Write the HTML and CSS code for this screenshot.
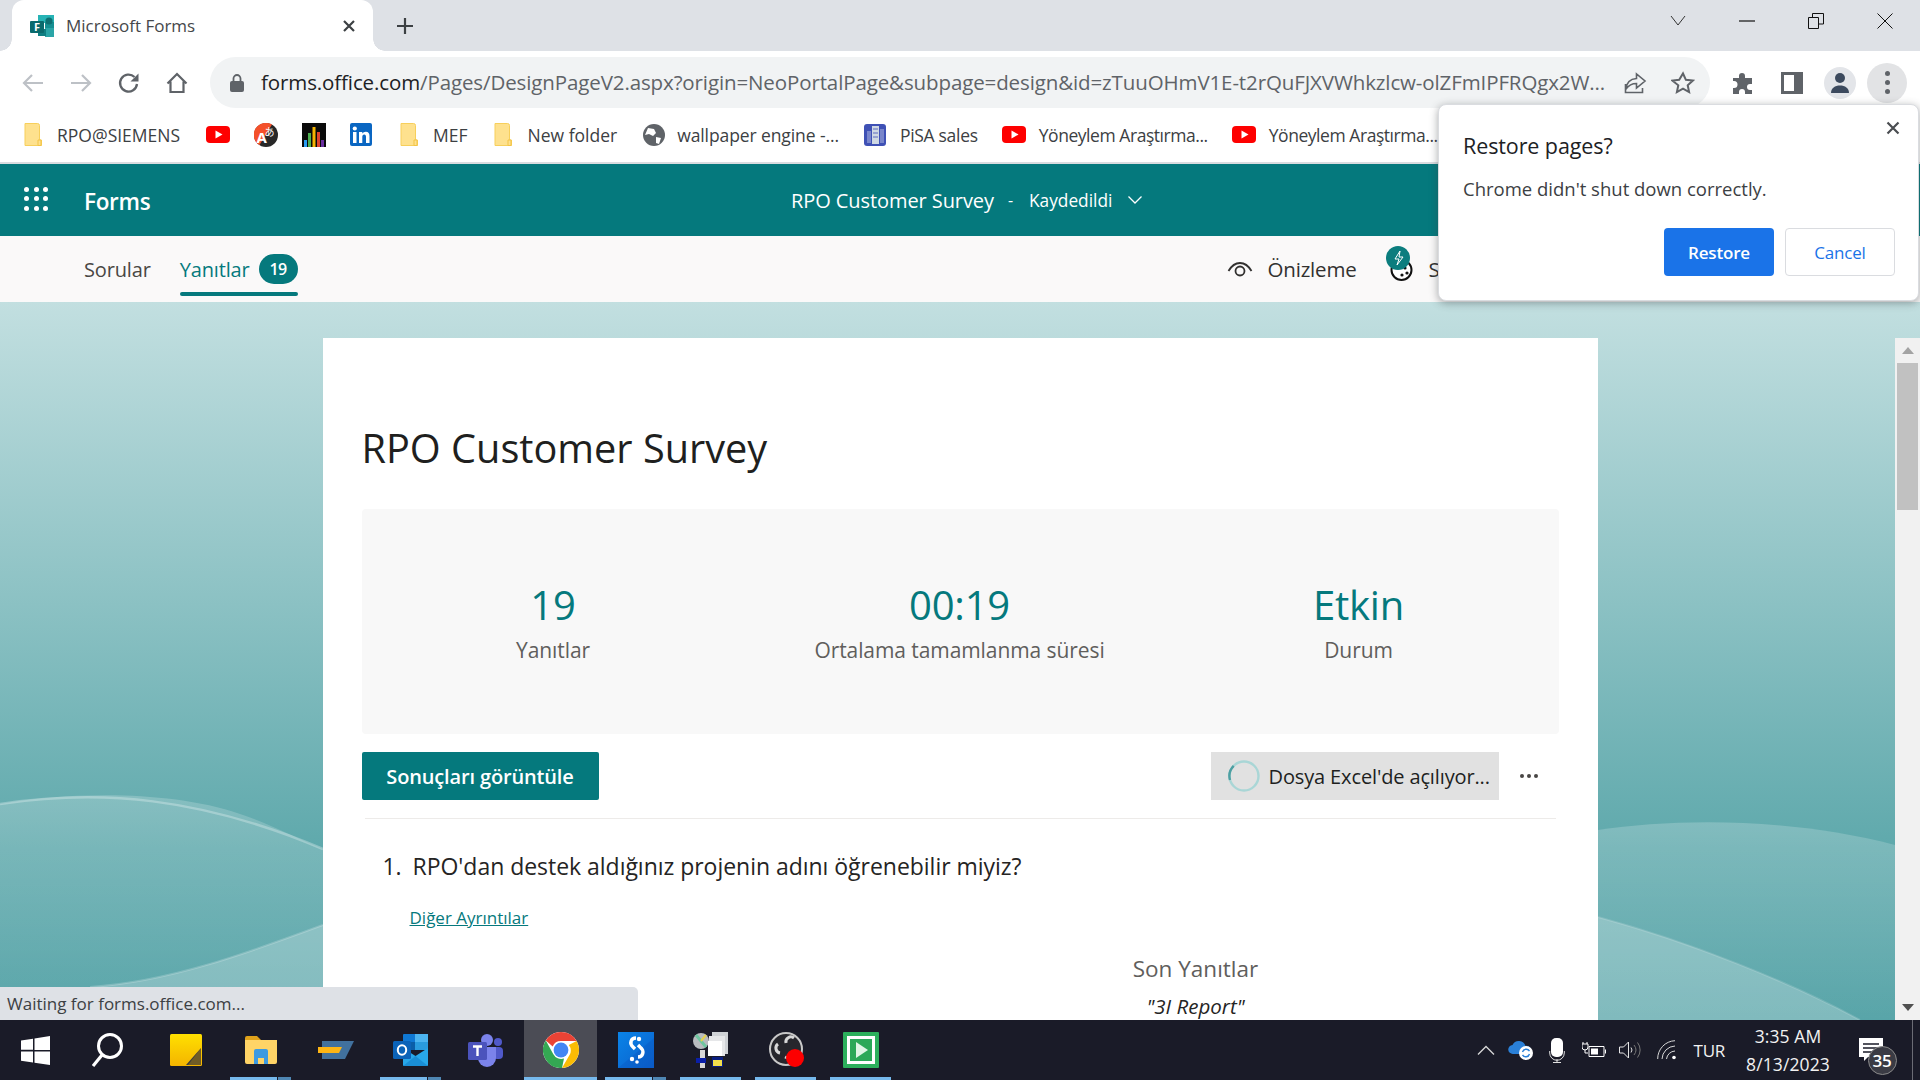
FILE: index.html
```html
<!DOCTYPE html>
<html lang="tr">
<head>
<meta charset="utf-8">
<title>Microsoft Forms</title>
<link rel="stylesheet" href="styles.css">
</head>
<body>
<div class="app">

  <header class="tabstrip">
    <div class="tab">
      <svg width="24" height="22" viewBox="0 0 24 22"><rect x="8" width="16" height="8" fill="#27b3b5"/><rect x="15" y="7" width="9" height="7" fill="#158f92"/><rect x="15" y="13" width="9" height="9" fill="#2aa5a7"/><rect x="8" y="14" width="8" height="7" fill="#0f7f82"/><circle cx="19" cy="6" r="3.6" fill="#0e6f72"/><rect y="6" width="14" height="12" rx="1" fill="#0a6a6d"/><text x="7" y="16" class="fav-f">F</text></svg>
      <span class="tab-title">Microsoft Forms</span>
      <svg class="tab-x" width="14" height="14" viewBox="0 0 14 14"><path d="M2 2l10 10M12 2L2 12" stroke="#3c4043" stroke-width="2.2" fill="none"/></svg>
    </div>
    <svg class="newtab" width="18" height="18" viewBox="0 0 18 18"><path d="M9 1v16M1 9h16" stroke="#3c4043" stroke-width="2.2" fill="none"/></svg>
    <div class="winctl">
      <svg width="16" height="12" viewBox="0 0 16 12"><path d="M1 1l7 9 7-9" stroke="#333" fill="none"/></svg>
      <svg width="16" height="12" viewBox="0 0 16 12"><path d="M0 6h16" stroke="#111" stroke-width="1.2"/></svg>
      <svg width="16" height="16" viewBox="0 0 16 16"><path d="M.5 4.5h10v11H.5zM4.5 4V.5h11V11H11" stroke="#111" fill="none"/></svg>
      <svg width="16" height="16" viewBox="0 0 16 16"><path d="M.5.5l15 15M15.500 .5l-15 15" stroke="#111" fill="none"/></svg>
    </div>
  </header>

  <div class="toolbar">
    <div class="navbtns">
      <svg width="24" height="24" viewBox="0 0 24 24"><path d="M22 12H3M11 4l-8 8 8 8" stroke="#bdc1c6" stroke-width="2.200" fill="none"/></svg>
      <svg width="24" height="24" viewBox="0 0 24 24"><path d="M2 12h19M13 4l8 8-8 8" stroke="#bdc1c6" stroke-width="2.200" fill="none"/></svg>
      <svg width="24" height="24" viewBox="0 0 24 24"><path d="M20 13a8.500 8.500 0 1 1-2.500-7" stroke="#5f6368" stroke-width="2.300" fill="none"/><path d="M21.500 2.500v8h-8z" fill="#5f6368"/></svg>
      <svg width="24" height="24" viewBox="0 0 24 24"><path d="M2.500 12.500L12 3l9.500 9.500M5.500 10.500V21h13V10.500" stroke="#5f6368" stroke-width="2.200" fill="none"/></svg>
    </div>
    <div class="omnibox">
      <svg width="14" height="18" viewBox="0 0 14 18"><rect y="7" width="14" height="11" rx="2" fill="#5f6368"/><path d="M3.500 8V4.500a3.500 3.500 0 0 1 7 0V8" stroke="#5f6368" stroke-width="1.800" fill="none"/></svg>
      <div class="url"><span class="url-host">forms.office.com</span>/Pages/DesignPageV2.aspx?origin=NeoPortalPage&amp;subpage=design&amp;id=zTuuOHmV1E-t2rQuFJXVWhkzlcw-olZFmIPFRQgx2W...</div>
      <svg class="omni-ico" width="24" height="24" viewBox="0 0 24 24"><path d="M2.500 13v8.500h17V17M13.500 3v4.500C7 8 3.500 12 3 18c2.500-3.500 5.500-5.500 10.500-5.500V17L22 10z" stroke="#5f6368" stroke-width="1.600" fill="none"/></svg>
      <svg class="omni-ico" width="24" height="24" viewBox="0 0 24 24"><path d="M12 2.500l2.900 6.300 6.900.8-5.100 4.700 1.400 6.800-6.100-3.400-6.100 3.400 1.400-6.800L1.300 9.600l6.900-.8z" stroke="#5f6368" stroke-width="2" fill="none"/></svg>
    </div>
    <div class="tool-right">
      <svg width="24" height="24" viewBox="0 0 24 24"><path d="M2 7h6V5a3 3 0 0 1 6 0v2h7v6h-2a3 3 0 0 0 0 6h2v4h-7v-2a3 3 0 0 0-6 0v2H2v-6h1a3.500 3.500 0 0 0 0-7H2z" fill="#5f6368"/></svg>
      <svg width="22" height="24" viewBox="0 0 22 24"><path d="M1.500 2.500h19v19h-19z" stroke="#5f6368" stroke-width="3" fill="none"/><rect x="13" y="2" width="8" height="20" fill="#5f6368"/></svg>
      <div class="avatar"><svg width="20" height="22" viewBox="0 0 20 22"><circle cx="10" cy="6" r="5" fill="#3c4a5e"/><path d="M1 21c0-5 4-7.500 9-7.500s9 2.500 9 7.500z" fill="#3c4a5e"/></svg></div>
      <div class="kebab"><i></i><i></i><i></i></div>
    </div>
  </div>

  <nav class="bookmarks">
    <a class="bm bm-rpo"><svg class="ic-folder" width="18" height="23" viewBox="0 0 18 23"><use href="#folder"/></svg><span>RPO@SIEMENS</span></a>
    <a class="bm bm-ic"><svg width="24" height="17" viewBox="0 0 24 17"><use href="#yt"/></svg></a>
    <a class="bm bm-ic"><svg width="24" height="24" viewBox="0 0 24 24"><circle cx="12" cy="12" r="12" fill="#282828"/><path d="M18 1.600A12 12 0 0 0 5.500 22.100z" fill="#f4502a"/><text x="2.500" y="20" class="tr-a">A</text><text x="10.500" y="13" class="tr-b">あ</text></svg></a>
    <a class="bm bm-ic"><svg width="24" height="24" viewBox="0 0 24 24"><rect width="24" height="24" fill="#0a0a0a"/><rect x="2" y="17" width="3" height="7" fill="#2a9df4"/><rect x="6" y="10" width="3" height="14" fill="#4caf50"/><rect x="10.500" y="4" width="3" height="20" fill="#f5b400"/><rect x="15" y="9" width="3" height="15" fill="#e0452c"/><rect x="19" y="17" width="3" height="7" fill="#6a2fa0"/></svg></a>
    <a class="bm bm-ic bm-li"><svg width="22" height="23" viewBox="0 0 22 23"><rect width="22" height="23" rx="2" fill="#0a66c2"/><rect x="3" y="9" width="3.500" height="11" fill="#fff"/><circle cx="4.800" cy="5.500" r="2.100" fill="#fff"/><path d="M9 9h3.300v1.600c.7-1.100 2-1.900 3.500-1.900 2.700 0 3.700 1.700 3.700 4.500V20H16v-6c0-1.500-.5-2.400-1.800-2.400s-1.900 1-1.900 2.400v6H9z" fill="#fff"/></svg></a>
    <a class="bm bm-mef"><svg width="18" height="23" viewBox="0 0 18 23"><use href="#folder"/></svg><span>MEF</span></a>
    <a class="bm bm-new"><svg width="18" height="23" viewBox="0 0 18 23"><use href="#folder"/></svg><span>New folder</span></a>
    <a class="bm bm-wall"><svg width="22" height="22" viewBox="0 0 22 22"><circle cx="11" cy="11" r="11" fill="#5f6368"/><path d="M5 4l6 1 2 4-3 3-4-2-4 1zM13 13l5 1-2 6-3-1z" fill="#fff"/></svg><span>wallpaper engine -...</span></a>
    <a class="bm bm-pisa"><svg width="24" height="24" viewBox="0 0 24 24"><rect x="1" y="1" width="22" height="22" rx="3" fill="#3f51b5"/><rect x="9" y="3" width="7" height="18" fill="#cfd8e3"/><rect x="4" y="8" width="4" height="12" fill="#7986cb"/><rect x="17" y="6" width="4" height="14" fill="#7986cb"/><path d="M10 6h5M10 10h5M10 14h5" stroke="#5c6bc0"/></svg><span>PiSA sales</span></a>
    <a class="bm bm-y1"><svg width="24" height="17" viewBox="0 0 24 17"><use href="#yt"/></svg><span>Yöneylem Araştırma...</span></a>
    <a class="bm bm-y2"><svg width="24" height="17" viewBox="0 0 24 17"><use href="#yt"/></svg><span>Yöneylem Araştırma...</span></a>
  </nav>

  <svg class="defs" width="0" height="0">
    <defs>
      <symbol id="folder" viewBox="0 0 18 23"><path d="M1 .5h12.500a2 2 0 0 1 2 2V17h2v5.500H1z" fill="#fee18e" stroke="#f7cf5b"/><path d="M14 17h3v5.500h-3z" fill="#fee18e" stroke="#f3c446"/></symbol>
      <symbol id="yt" viewBox="0 0 24 17"><rect width="24" height="17" rx="4" fill="#fe0000"/><path d="M9.500 4.500v8l7-4z" fill="#fff"/></symbol>
      <linearGradient id="gw1" x1="0" y1="0" x2="0" y2="1"><stop offset="0" stop-color="#fff" stop-opacity=".2"/><stop offset="1" stop-color="#fff" stop-opacity=".02"/></linearGradient>
      <linearGradient id="gsky" x1="0" y1="0" x2="0" y2="1"><stop offset="0" stop-color="#ffe000"/><stop offset="1" stop-color="#f4b400"/></linearGradient>
      <linearGradient id="gs" x1="0" y1="0" x2="1" y2="1"><stop offset="0" stop-color="#0a84e8"/><stop offset="1" stop-color="#0b5fcb"/></linearGradient>
    </defs>
  </svg>

  <div class="formsbar">
    <div class="waffle"><i></i><i></i><i></i><i></i><i></i><i></i><i></i><i></i><i></i></div>
    <span class="brand">Forms</span>
    <span class="doc-title">RPO Customer Survey</span>
    <span class="doc-dash">-</span>
    <span class="doc-state">Kaydedildi</span>
    <svg width="16" height="10" viewBox="0 0 16 10"><path d="M1.500 1.500L8 8l6.500-6.500" stroke="#fff" stroke-width="1.300" fill="none"/></svg>
  </div>

  <div class="subnav">
    <a class="sub-link">Sorular</a>
    <a class="sub-link sub-on">Yanıtlar<b class="count">19</b></a>
    <div class="sub-right">
      <svg width="26" height="16" viewBox="0 0 26 16"><path d="M1.500 10C5 4 9 2 13 2s8 2 11.500 8" stroke="#323130" stroke-width="1.800" fill="none"/><circle cx="13" cy="10" r="4.500" stroke="#323130" stroke-width="1.800" fill="none"/></svg>
      <span class="preview">Önizleme</span>
      <span class="theme"><svg width="36" height="36" viewBox="0 0 36 36"><circle cx="15.500" cy="24" r="10" stroke="#111" stroke-width="2" fill="#fff"/><circle cx="19" cy="22" r="1.600" fill="#111"/><circle cx="21" cy="27" r="1.600" fill="#111"/><circle cx="16" cy="29" r="1.600" fill="#111"/><circle cx="12" cy="12" r="12" fill="#0b7d7e"/><path d="M14 5l-5 8h4l-2 6 6-8h-4z" stroke="#fff" fill="none"/></svg></span>
      <span class="share">S</span>
    </div>
  </div>

  <main class="page">
    <svg class="waves" width="1920" height="718" viewBox="0 0 1920 718">
      <path d="M0 502C70 490 170 488 240 512 270 522 300 538 323 547V718H0z" fill="url(#gw1)"/>
      <path d="M0 502C100 487 200 495 323 547" fill="none" stroke="#fff" stroke-opacity=".28" stroke-width="2.500"/>
      <path d="M90 685C170 680 250 650 323 623V718H90z" fill="#fff" fill-opacity=".24"/>
      <path d="M90 685C170 680 250 650 323 623" fill="none" stroke="#fff" stroke-opacity=".2" stroke-width="2"/>
      <path d="M1598 528C1680 516 1790 516 1895 543V718H1598z" fill="url(#gw1)"/>
      <path d="M1598 615C1690 640 1790 680 1860 718H1598z" fill="#fff" fill-opacity=".24"/>
      <path d="M1598 615C1690 640 1790 680 1860 718" fill="none" stroke="#fff" stroke-opacity=".14" stroke-width="2"/>
    </svg>
    <article class="card">
      <h1 class="form-title">RPO Customer Survey</h1>
      <section class="stats">
        <div class="stat"><div class="stat-num">19</div><div class="stat-label">Yanıtlar</div></div>
        <div class="stat"><div class="stat-num">00:19</div><div class="stat-label">Ortalama tamamlanma süresi</div></div>
        <div class="stat"><div class="stat-num">Etkin</div><div class="stat-label">Durum</div></div>
      </section>
      <div class="actions">
        <button class="btn-primary">Sonuçları görüntüle</button>
        <button class="btn-excel"><svg width="34" height="34" viewBox="0 0 34 34"><circle cx="17" cy="17" r="14.500" fill="none" stroke="#a9d6d6" stroke-width="2.400"/><path d="M6.700 6.800A14.500 14.500 0 0 0 3 21" fill="none" stroke="#4d9fa2" stroke-width="2.400"/></svg><span>Dosya Excel'de açılıyor...</span></button>
        <div class="more"><i></i><i></i><i></i></div>
      </div>
      <hr class="rule">
      <div class="question"><span class="q-no">1.</span><span>RPO'dan destek aldığınız projenin adını öğrenebilir miyiz?</span></div>
      <a class="details">Diğer Ayrıntılar</a>
      <div class="latest">
        <div class="latest-head">Son Yanıtlar</div>
        <div class="latest-item">"3I Report"</div>
      </div>
    </article>
    <div class="scrollbar">
      <div class="sb-up"></div>
      <div class="sb-thumb"></div>
      <div class="sb-down"></div>
    </div>
    <div class="status">Waiting for forms.office.com...</div>
  </main>

  <footer class="taskbar">
    <div class="task task-start"><svg width="31" height="31" viewBox="0 0 31 31"><path d="M1 5.500l12-1.700v11H1zM14.500 3.500L30 1v14H14.500zM1 16.500h12v11L1 25.700zM14.500 16.500H30V30l-15.500-2.300z" fill="#fff"/></svg></div>
    <div class="task task-search"><svg width="34" height="36" viewBox="0 0 34 36"><circle cx="18" cy="14" r="11.500" fill="none" stroke="#fff" stroke-width="3"/><path d="M10 23L1 34" stroke="#fff" stroke-width="3.200"/></svg></div>
    <div class="task"><svg width="32" height="32" viewBox="0 0 32 32"><rect width="32" height="32" rx="1.500" fill="url(#gsky)"/><path d="M16 31l15-17v17z" fill="#3b3b3b"/><path d="M31 14v17H18z" fill="#d39a00" opacity=".35"/></svg></div>
    <div class="task task-run task-stack"><svg width="32" height="28" viewBox="0 0 32 28"><path d="M0 2a2 2 0 0 1 2-2h10l4 4h16v4H0z" fill="#dfa21b"/><path d="M0 4h32v22a2 2 0 0 1-2 2H2a2 2 0 0 1-2-2z" fill="#ffd467"/><path d="M9 28v-13a2 2 0 0 1 2-2h10a2 2 0 0 1 2 2v13h-4v-6h-6v6z" fill="#3d9ae0"/><rect x="13" y="22" width="6" height="6" fill="#ffd467"/></svg></div>
    <div class="task"><svg width="36" height="18" viewBox="0 0 36 18"><path d="M4 0h32l-9 18H4z" fill="#41719e"/><path d="M0 6h24l-3 6H0z" fill="#fdb515"/></svg></div>
    <div class="task task-run task-stack"><svg width="35" height="32" viewBox="0 0 35 32"><rect x="10" width="25" height="15" rx="1" fill="#0f78d4"/><rect x="22" width="13" height="8" fill="#4cb4f0"/><rect x="10" y="8" width="12" height="8" fill="#0b5ea8"/><rect x="22" y="8" width="13" height="8" fill="#2a9cdf"/><path d="M10 14l12.500 8L35 14v17a1 1 0 0 1-1 1H11a1 1 0 0 1-1-1z" fill="#28a8ea"/><path d="M10 32l12.500-10L35 32z" fill="#1a8fd6"/><rect y="7" width="18" height="18" rx="1.500" fill="#0b63b8"/><ellipse cx="9" cy="16" rx="4.200" ry="4.700" fill="none" stroke="#fff" stroke-width="2"/></svg></div>
    <div class="task"><svg width="35" height="33" viewBox="0 0 35 33"><circle cx="30" cy="8" r="4" fill="#5059c9"/><rect x="25" y="13" width="10" height="12" rx="4" fill="#5059c9"/><circle cx="19" cy="6" r="6" fill="#7b83eb"/><path d="M10 13h18v11a9 9 0 0 1-18 0z" fill="#7b83eb"/><rect y="8" width="19" height="18" rx="1.500" fill="#4b53bc"/><path d="M5 12.500h9M9.500 12.500V22" stroke="#fff" stroke-width="2.400"/></svg></div>
    <div class="task task-on task-run"><svg width="36" height="36" viewBox="0 0 36 36"><circle cx="18" cy="18" r="18" fill="#fff"/><path d="M18 0a18 18 0 0 1 15.600 9H18a9 9 0 0 0-8.300 5.400L2.800 8.500A18 18 0 0 1 18 0z" fill="#ea4335"/><path d="M33.600 9A18 18 0 0 1 19 36l7.800-13.500A9 9 0 0 0 25.800 13z" fill="#fbbc04"/><path d="M2.800 8.500L10.200 22A9 9 0 0 0 21 26.500L19 36A18 18 0 0 1 2.800 8.500z" fill="#34a853"/><circle cx="18" cy="18" r="7.400" fill="#4285f4"/></svg></div>
    <div class="task task-run task-stack"><svg width="36" height="36" viewBox="0 0 36 36"><rect width="36" height="36" fill="url(#gs)"/><path d="M0 36l36-30v30z" fill="#0a4fb8" opacity=".3"/><path d="M18 6c-5 0-7 5-3 9l2 2" fill="none" stroke="#fff" stroke-width="3.400"/><path d="M20 13l2 2c5 4 3 10-2 10" fill="none" stroke="#fff" stroke-width="3.400"/><circle cx="21" cy="7" r="2.200" fill="#fff"/><circle cx="14" cy="27" r="2.200" fill="#fff"/><circle cx="19" cy="30" r="1.800" fill="#fff"/></svg></div>
    <div class="task task-run"><svg width="36" height="36" viewBox="0 0 36 36"><circle cx="8" cy="9" r="8" fill="#b9bcc0"/><path d="M8 9L3 3M8 9l5 6" stroke="#6fc6a0" stroke-width="3"/><path d="M8 9l5-6" stroke="#e4d24f" stroke-width="2"/><rect x="19" y="0" width="16" height="22" fill="#cfd2d6"/><rect x="16" y="4" width="16" height="20" fill="#e6e7e9"/><rect x="15" y="9" width="14" height="15" fill="#fff"/><rect x="7" y="18" width="5" height="18" fill="#d8d8d8"/><rect x="3" y="26" width="10" height="5" fill="#0a1fa8"/><rect x="19" y="25" width="11" height="10" fill="#0a1f80"/><rect x="20" y="28" width="9" height="6" fill="#f3e04c"/></svg></div>
    <div class="task task-run"><svg width="36" height="36" viewBox="0 0 36 36"><circle cx="18" cy="17" r="16" fill="#26262c" stroke="#c8c8c8" stroke-width="2"/><path d="M18 11a5 5 0 0 1 8-5M12 21a5 5 0 0 1-2-9M24 21a5 5 0 0 1-7 4" fill="none" stroke="#d8d8d8" stroke-width="3"/><circle cx="27" cy="26" r="9" fill="#fd0000"/></svg></div>
    <div class="task task-run"><svg width="36" height="36" viewBox="0 0 36 36"><rect width="36" height="36" rx="1" fill="#2cb05c"/><rect x="4" y="4" width="28" height="28" fill="#fff"/><rect x="7" y="7" width="22" height="22" fill="#2aa858"/><path d="M13 10l12 8-12 8z" fill="#dff5e6"/></svg></div>

    <div class="tray">
      <svg width="18" height="10" viewBox="0 0 18 10"><path d="M1 9.500L9 1.500l8 8" stroke="#d8d8d8" stroke-width="1.300" fill="none"/></svg>
      <svg class="tray-cloud" width="26" height="20" viewBox="0 0 26 20"><path d="M5 14a4.500 4.500 0 0 1-.5-9 7 7 0 0 1 13 1A4 4 0 0 1 20 14z" fill="#2a80d8"/><circle cx="18" cy="13" r="7" fill="#fff"/><path d="M14.500 12a3.800 3.800 0 0 1 7-.8M21.500 14a3.800 3.800 0 0 1-7 .8" stroke="#2a80d8" stroke-width="1.400" fill="none"/></svg>
      <svg class="tray-mic" width="16" height="25" viewBox="0 0 16 25"><rect x="2" width="12" height="19" rx="5" fill="#fff"/><path d="M.7 13v2a7 7 0 0 0 14.600 0v-2M8 21v3M4 24.500h8" stroke="#e0e0e0" fill="none"/></svg>
      <svg class="tray-batt" width="24" height="16" viewBox="0 0 24 16"><path d="M1 2v-2M5 2v-2" stroke="#fff"/><path d="M0 2h6v3a3 3 0 0 1-6 0zM3 8v3h3" stroke="#fff" fill="none"/><path d="M7 4.500h15v10H7z" stroke="#fff" fill="none"/><rect x="9" y="6.500" width="7" height="6" fill="#fff"/><rect x="23" y="7.500" width="1" height="4" fill="#fff"/></svg>
      <svg class="tray-vol" width="23" height="18" viewBox="0 0 23 18"><path d="M.5 6v6h4l5 5V1l-5 5z" stroke="#e6e6e6" fill="none"/><path d="M12 6.500a4 4 0 0 1 0 5" stroke="#ddd" fill="none"/><path d="M15 4a8 8 0 0 1 0 10M18.500 1.500a12 12 0 0 1 0 15" stroke="#777" fill="none"/></svg>
      <svg class="tray-wifi" width="20" height="20" viewBox="0 0 20 20"><path d="M.7 19A18 18 0 0 1 18 .7M5 19A13.500 13.500 0 0 1 18 6M9.500 19A9 9 0 0 1 18 11" stroke="#d8d8d8" fill="none"/><circle cx="17" cy="17.500" r="1.800" fill="#fff"/></svg>
      <span class="tray-lang">TUR</span>
      <div class="clock"><div>3:35 AM</div><div>8/13/2023</div></div>
      <div class="notif"><svg width="24" height="24" viewBox="0 0 24 24"><path d="M0 0h24v19H9l-4 4v-4H0z" fill="#fff"/><path d="M4 6h16M4 10h16M4 14h10" stroke="#1a1b28" stroke-width="1.300"/></svg><span class="notif-count">35</span></div>
      <div class="showdesk"></div>
    </div>
  </footer>

  <aside class="popup">
    <svg class="popup-x" width="14" height="14" viewBox="0 0 14 14"><path d="M1.500 1.500l11 11M12.500 1.500l-11 11" stroke="#4a4d51" stroke-width="2.200" fill="none"/></svg>
    <div class="popup-title">Restore pages?</div>
    <div class="popup-text">Chrome didn't shut down correctly.</div>
    <div class="popup-btns">
      <button class="pbtn pbtn-main">Restore</button>
      <button class="pbtn pbtn-alt">Cancel</button>
    </div>
  </aside>
</div>
</body>
</html>
```

FILE: styles.css
```css
* { box-sizing: border-box; }
html, body { margin: 0; height: 100%; overflow: hidden; }
body { font-family: "Open Sans", "Noto Sans", sans-serif; color: #323130; }
button { font-family: inherit; border: 0; padding: 0; }
svg { display: block; flex: none; }
h1 { margin: 0; font-weight: 400; }

.app { position: relative; width: 1920px; height: 1080px; display: flex; flex-direction: column; overflow: hidden; background: #fff; }
.defs { position: absolute; }

/* tab strip */
.tabstrip { height: 51px; flex: none; background: #dee1e6; display: flex; align-items: center; padding-left: 12px; }
.tab { position: relative; width: 361px; height: 51px; background: #fff; border-radius: 12px 12px 0 0; display: flex; align-items: center; padding: 0 18px; gap: 12px; }
.tab::before, .tab::after { content: ""; position: absolute; bottom: 0; width: 12px; height: 12px; }
.tab::before { left: -12px; background: radial-gradient(circle at 0 0, #dee1e6 11.5px, #fff 12px); }
.tab::after { right: -12px; background: radial-gradient(circle at 100% 0, #dee1e6 11.5px, #fff 12px); }
.fav-f { font: 700 11px "Open Sans", sans-serif; fill: #fff; text-anchor: middle; }
.tab-title { flex: 1; font-size: 17px; color: #45474a; white-space: nowrap; }
.tab-x { margin-right: -1px; }
.newtab { margin-left: 23px; }
.winctl { margin-left: auto; margin-right: 27px; display: flex; align-items: center; gap: 53px; margin-top: -9px; }

/* toolbar */
.toolbar { height: 57px; flex: none; background: #fff; display: flex; align-items: center; padding-top: 6px; }
.navbtns { width: 210px; padding-left: 21px; display: flex; gap: 24px; flex: none; }
.omnibox { width: 1500px; height: 51px; border-radius: 26px; background: #f1f3f4; display: flex; align-items: center; padding-left: 20px; flex: none; }
.url { width: 1362px; margin-left: 17px; flex: none; font-size: 20.500px; letter-spacing: -.115px; line-height: 28px; margin-top: -1px; color: #5f6368; white-space: nowrap; }
.url-host { color: #202124; }
.omni-ico + .omni-ico { margin-left: 24px; }
.tool-right { display: flex; align-items: center; padding-left: 21px; gap: 26px; }
.avatar { width: 32px; height: 32px; margin: 0 -6px 0 -5px; border-radius: 50%; background: #e3e5e9; display: flex; align-items: center; justify-content: center; }
.kebab { width: 40px; height: 40px; border-radius: 50%; background: #e2e3e5; display: flex; flex-direction: column; align-items: center; justify-content: center; gap: 4px; margin-left: -9px; }
.kebab i { width: 5px; height: 5px; border-radius: 50%; background: #5f6368; }

/* bookmarks */
.bookmarks { height: 56px; flex: none; display: flex; align-items: center; padding: 0 0 1px 24px; background: #fff; border-bottom: 2px solid #dadce0; font-size: 17.500px; color: #3c4043; white-space: nowrap; overflow: hidden; }
.bm { display: flex; align-items: center; gap: 15px; flex: none; }
.bm-rpo { margin-right: 26px; }
.bm-ic { margin-right: 24px; }
.bm-li { margin-right: 28px; }
.bm-mef { margin-right: 26px; }
.bm-new { margin-right: 26px; gap: 16px; }
.bm-wall { gap: 12px; margin-right: 24px; letter-spacing: -.1px; }
.bm-pisa { gap: 13px; margin-right: 24px; letter-spacing: -.3px; }
.bm-y1 { gap: 13px; margin-right: 24px; letter-spacing: -.45px; }
.bm-y2 { gap: 13px; letter-spacing: -.45px; }
.tr-a { font: 700 15px "Open Sans", sans-serif; fill: #fff; }
.tr-b { font: 400 10px "Noto Sans CJK JP", sans-serif; fill: #fff; }

/* forms bar */
.formsbar { height: 72px; flex: none; background: #05797d; color: #fff; display: flex; align-items: center; padding-left: 24px; }
.waffle { width: 22px; display: grid; grid-template-columns: repeat(3, 5px); gap: 4.500px; margin-top: -3px; }
.waffle i { width: 5px; height: 5px; border-radius: 50%; background: #fff; }
.brand { margin-left: 38px; width: 707px; font-size: 22.500px; font-weight: 600; letter-spacing: -.3px; margin-top: 2px; }
.doc-title { font-size: 20px; letter-spacing: -.08px; width: 217px; white-space: nowrap; }
.doc-dash { width: 21px; font-size: 16px; }
.doc-state { font-size: 17.300px; width: 98px; white-space: nowrap; }

/* sub nav */
.subnav { height: 66px; flex: none; background: #faf9f9; display: flex; padding-left: 84px; }
.sub-link { height: 66px; display: flex; align-items: center; font-size: 20px; letter-spacing: -.15px; color: #494744; margin-right: 29px; }
.sub-on { position: relative; color: #05797d; margin: 0; font-weight: 500; }
.sub-on::after { content: ""; position: absolute; left: 0; right: 0; top: 56px; height: 4px; border-radius: 2px; background: #05797d; }
.count { margin-left: 9px; width: 39px; height: 30px; border-radius: 15px; background: #05797d; color: #fff; font-size: 16px; font-weight: 600; letter-spacing: -.6px; display: flex; align-items: center; justify-content: center; }
.sub-right { margin-left: 929.500px; display: flex; align-items: center; position: relative; height: 66px; }
.preview { margin-left: 14.500px; font-size: 20.500px; font-weight: 500; letter-spacing: -.2px; color: #323130; }
.theme { margin-left: 29px; margin-top: -10px; }
.share { margin-left: 7px; font-size: 20.500px; font-weight: 500; color: #323130; }

/* page */
.page { position: relative; flex: 1; min-height: 0; overflow: hidden; padding-top: 36px; background: linear-gradient(#c2dfe0 0, #5fa9ac 76%, #55a3a7 100%); }
.waves { position: absolute; left: 0; top: 0; }
.card { position: relative; width: 1275px; margin: 0 auto; min-height: 800px; padding: 85px 39px 0; background: #fff; }
.form-title { font-size: 39.700px; line-height: 50px; color: #201f1e; }
.stats { margin-top: 36px; height: 225px; background: #f8f8f8; border-radius: 4px; display: grid; grid-template-columns: 383px 430px 368px; padding-top: 72px; text-align: center; align-content: start; }
.stat-num { font-size: 40px; line-height: 48px; color: #05797d; letter-spacing: -.2px; }
.stat-label { margin-top: 6px; font-size: 21px; line-height: 30px; color: #605e5c; letter-spacing: -.08px; }
.actions { margin-top: 18px; height: 48px; display: flex; align-items: center; }
.btn-primary { width: 237px; height: 48px; border-radius: 2px; background: #05797d; color: #fff; font-size: 20px; font-weight: 600; letter-spacing: -.15px; }
.btn-excel { margin-left: 612px; width: 288px; height: 48px; background: #e1e1e1; display: flex; align-items: center; padding-left: 16px; gap: 8px; font-size: 20px; letter-spacing: -.13px; color: #201f1e; white-space: nowrap; }
.more { margin-left: 21px; display: flex; gap: 3px; margin-top: -1px; }
.more i { width: 4px; height: 4px; border-radius: 50%; background: #484644; }
.rule { margin: 18px 3px 0; border: 0; border-top: 1px solid #edebe9; }
.question { margin: 32px 0 0 21px; height: 30px; display: flex; font-size: 23px; line-height: 30px; letter-spacing: -.03px; color: #252423; white-space: nowrap; }
.q-no { width: 30px; }
.details { display: block; width: max-content; margin: 24px 0 0 48px; font-size: 17px; line-height: 26px; color: #05797d; text-decoration: underline; }
.latest { margin: 23px 0 0 634px; width: 400px; text-align: center; }
.latest-head { font-size: 22.500px; line-height: 30px; color: #605e5c; }
.latest-item { margin-top: 9px; font-size: 20.500px; line-height: 26px; font-style: italic; color: #252423; }

.scrollbar { position: absolute; right: 0; top: 36px; bottom: 0; width: 25px; background: #f1f1f1; display: flex; flex-direction: column; align-items: center; padding: 9px 0 9px; }
.sb-up { width: 0; height: 0; border: 6px solid transparent; border-top: 0; border-bottom: 7px solid #a3a3a3; }
.sb-thumb { width: 21px; height: 147px; margin-top: 9px; background: #c1c1c1; }
.sb-down { width: 0; height: 0; margin-top: auto; border: 6px solid transparent; border-bottom: 0; border-top: 7px solid #505050; }
.status { position: absolute; left: 0; bottom: 0; width: 638px; height: 33px; border-radius: 0 5px 0 0; background: #dee1e6; padding-left: 7px; font-size: 17px; line-height: 34px; color: #3c4043; }

/* taskbar */
.taskbar { height: 60px; flex: none; background: #1a1b28; display: flex; align-items: stretch; color: #f2f2f2; padding-left: 1px; }
.task { position: relative; width: 73px; margin: 0 1px; display: flex; align-items: center; justify-content: center; flex: none; }
.task-start { margin-left: -2px; }
.task-search { padding-right: 3px; }
.task-on { background: #4b4c55; }
.task-run::after { content: ""; position: absolute; left: 6px; right: 6px; bottom: 0; height: 3px; background: #76b9ed; }
.task-on::after { left: 0; right: 0; }
.task-stack::after { background: linear-gradient(to right, #76b9ed 47px, #1a1b28 47px 48px, #4f87b4 48px); }
.tray { margin-left: auto; display: flex; align-items: center; }
.tray-cloud { margin-left: 13px; }
.tray-mic { margin-left: 15px; }
.tray-batt { margin-left: 17px; }
.tray-vol { margin-left: 13px; }
.tray-wifi { margin-left: 15px; }
.tray-lang { margin-left: 17px; font-size: 17px; letter-spacing: -.2px; width: 32px; }
.clock { width: 139px; margin-left: -7px; text-align: center; font-size: 17.500px; line-height: 28.500px; letter-spacing: .1px; }
.notif { position: relative; width: 50px; height: 40px; margin-left: -4px; display: flex; padding: 8px 0 0 5px; }
.notif-count { position: absolute; left: 14px; top: 16px; width: 29px; height: 29px; border-radius: 50%; border: 1px solid #8a8a8a; background: #3a3b44; color: #fff; font-size: 17px; font-weight: 600; letter-spacing: -.3px; display: flex; align-items: center; justify-content: center; }
.showdesk { width: 1.500px; height: 60px; margin-left: 8px; background: #6b6c75; margin-right: 7px; }

/* restore popup */
.popup { position: absolute; left: 1438px; top: 104px; width: 481px; height: 197px; padding: 25px 23px 0 24px; background: #fff; border: 1px solid #dadce0; border-radius: 8px; box-shadow: 0 2px 8px rgba(60, 64, 67, .45); color: #202124; }
.popup-x { position: absolute; right: 18px; top: 16px; }
.popup-title { font-size: 21.500px; line-height: 32px; letter-spacing: -.1px; }
.popup-text { margin-top: 12px; font-size: 18.500px; line-height: 30px; color: #3c4043; }
.popup-btns { margin-top: 24px; display: flex; justify-content: flex-end; gap: 11px; }
.pbtn { width: 110px; height: 48px; border-radius: 4px; font-size: 17px; letter-spacing: -.2px; font-weight: 600; }
.pbtn-main { background: #1a73e8; color: #fff; }
.pbtn-alt { background: #fff; color: #1a73e8; border: 1px solid #dadce0; font-weight: 400; }
```
